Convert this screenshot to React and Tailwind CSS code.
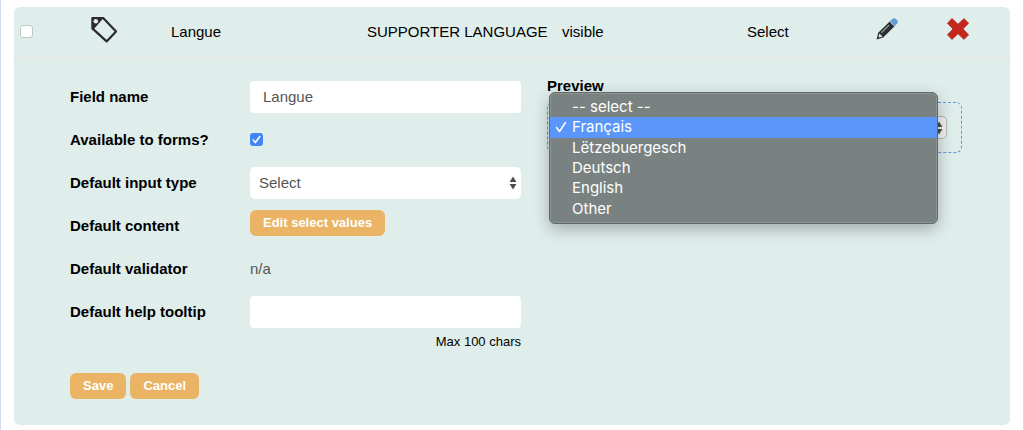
import React from "react";

const OPTIONS = ["-- select --", "Français", "Lëtzebuergesch", "Deutsch", "English", "Other"];

function TagIcon() {
  return (
    <svg width="28" height="28" viewBox="0 0 28 28" aria-hidden="true">
      <path d="M2.4 2h10.8L26 15.4 16.6 25.4 2.4 12.4z" fill="none" stroke="#2b2b2e" strokeWidth="2.2" strokeLinejoin="round" />
      <path d="M2 1.6h12L2.6 14.6 2 12z" fill="#2b2b2e" />
      <circle cx="5.8" cy="5.2" r="2.3" fill="#dfedeb" />
    </svg>
  );
}

function PencilIcon() {
  return (
    <svg width="22" height="22" viewBox="0 0 22 22" aria-hidden="true">
      <path d="M.6 21.4 2.2 14.8 14 3.2 18.8 8 7.2 19.6z" fill="#2b2e30" />
      <path d="M2.4 18.8l1-3.4 3.2 3.2-2.9 1z" fill="#d3dedc" />
      <path d="M5.4 14.8 13.2 7" fill="none" stroke="#8f9897" strokeWidth="1.3" />
      <path d="M14.2 3 16.2 1q2-1.6 3.8 0l1 1q1.6 2 0 3.8L19 7.8z" fill="#5e9fd8" />
      <path d="m13.6 3.6 4.8 4.8" stroke="#aebfc6" strokeWidth=".8" />
    </svg>
  );
}

function CrossIcon() {
  return (
    <svg width="22" height="22" viewBox="0 0 22 22" aria-hidden="true">
      <path
        d="M5 .6 11 6.3 17 .6l4.6 4.6L16 11l5.6 5.8-4.6 4.6-6-5.7-6 5.7-4.6-4.6L6 11 .4 5.2z"
        fill="#c2281d"
        stroke="#c2281d"
        strokeWidth=".8"
        strokeLinejoin="round"
      />
    </svg>
  );
}

function UpDown() {
  return (
    <svg width="8" height="14" viewBox="0 0 8 14" aria-hidden="true">
      <path d="M4 .4 7.4 6H.6zM4 13.6 7.4 8H.6z" fill="#4b4b4b" />
    </svg>
  );
}

function Row({ label, htmlFor, children }) {
  return (
    <div className="flex h-[43px] items-center">
      {htmlFor ? (
        <label htmlFor={htmlFor} className="w-[180px] shrink-0 font-bold">{label}</label>
      ) : (
        <span className="w-[180px] shrink-0 font-bold">{label}</span>
      )}
      <div className="flex min-w-0 flex-1 items-center">{children}</div>
    </div>
  );
}

function Button({ children }) {
  return (
    <button type="button" className="h-[26px] rounded-md bg-[#eab464] px-[13px] text-[13px] font-bold text-white">
      {children}
    </button>
  );
}

function PreviewMenu() {
  return (
    <ul
      role="listbox"
      aria-label="Preview options"
      className="absolute -top-[11px] right-[23px] left-px flex h-[132px] flex-col rounded-md border border-[#626a69] bg-[#7a8281] py-1 font-['Inter',sans-serif] text-[15px] text-white shadow-[0_5px_16px_rgba(0,0,0,0.28),inset_0_0_0_1px_#8c9392]"
    >
      {OPTIONS.map((option) => {
        const selected = option === "Français";
        return (
          <li
            key={option}
            role="option"
            aria-selected={selected}
            className={selected ? "flex flex-1 items-center bg-[#5b97fb]" : "flex flex-1 items-center"}
          >
            <span className="flex w-[22px] justify-center">
              {selected && (
                <svg width="12" height="12" viewBox="0 0 12 12" aria-hidden="true">
                  <path d="m1.5 6.5 3 4 6-9" fill="none" stroke="white" strokeWidth="1.5" strokeLinecap="round" strokeLinejoin="round" />
                </svg>
              )}
            </span>
            {option}
          </li>
        );
      })}
    </ul>
  );
}

export default function App() {
  return (
    <main className="min-h-screen border-x border-[#d0dce9] bg-white px-[13px] pt-[7px] pb-[5px] font-['Liberation_Sans',Arial,sans-serif] text-[15px] leading-5 text-black">
      <section className="rounded-md bg-[#dfedeb]">
        <header className="grid h-[50px] grid-cols-[70fr_81fr_196fr_195fr_185fr_129fr_71fr_63fr] items-center border-b border-[#e6e7e6] pl-1.5">
          <input
            type="checkbox"
            aria-label="Select Langue"
            className="size-[13px] appearance-none rounded-[3px] border border-[#c3c6c6] bg-white"
          />
          <span className="pb-1"><TagIcon /></span>
          <span>Langue</span>
          <span className="whitespace-nowrap">SUPPORTER LANGUAGE</span>
          <span>visible</span>
          <span>Select</span>
          <button type="button" aria-label="Edit" className="justify-self-start pb-1.5"><PencilIcon /></button>
          <button type="button" aria-label="Delete" className="justify-self-start pb-1.5"><CrossIcon /></button>
        </header>

        <form className="grid grid-cols-[451fr_415fr] gap-x-[26px] pt-[18px] pr-12 pb-[26px] pl-14">
          <div>
            <Row label="Field name" htmlFor="field-name">
              <input
                id="field-name"
                type="text"
                defaultValue="Langue"
                className="h-8 w-full rounded-[4px] bg-white px-[13px] text-[#555]"
              />
            </Row>
            <Row label="Available to forms?" htmlFor="available">
              <span className="relative flex">
                <input
                  id="available"
                  type="checkbox"
                  defaultChecked
                  className="peer size-[13px] appearance-none rounded-[3px] bg-white checked:bg-[#4285f4]"
                />
                <svg className="pointer-events-none absolute inset-0 hidden peer-checked:block" width="13" height="13" viewBox="0 0 13 13" aria-hidden="true">
                  <path d="m3.2 7 2.2 2.5 4.4-6" fill="none" stroke="white" strokeWidth="1.5" strokeLinecap="round" />
                </svg>
              </span>
            </Row>
            <Row label="Default input type" htmlFor="input-type">
              <div className="relative w-full">
                <select id="input-type" defaultValue="Select" className="block h-8 w-full appearance-none rounded-[5px] bg-white px-[9px] text-[#555]">
                  <option>Select</option>
                  <option>Text</option>
                </select>
                <span className="pointer-events-none absolute inset-y-0 right-1 flex items-center"><UpDown /></span>
              </div>
            </Row>
            <Row label="Default content">
              <span className="pb-1.5"><Button>Edit select values</Button></span>
            </Row>
            <Row label="Default validator">
              <span className="text-[#555]">n/a</span>
            </Row>
            <Row label="Default help tooltip" htmlFor="tooltip">
              <input id="tooltip" type="text" className="h-8 w-full rounded-[4px] bg-white px-[13px] text-[#555]" />
            </Row>
            <p className="-mt-px text-right text-[13px]">Max 100 chars</p>
            <div className="mt-[21px] flex gap-1">
              <Button>Save</Button>
              <Button>Cancel</Button>
            </div>
          </div>

          <div>
            <label htmlFor="preview" className="mt-px block font-bold">Preview</label>
            <div className="relative mt-1.5 rounded-md border border-dashed border-[#5b9bd8] px-3.5 py-[13px]">
              <div className="relative">
                <select id="preview" defaultValue="Français" className="block h-[23px] w-full appearance-none rounded-[5px] border border-[#b5b8b8] bg-[#f2f2f2] px-2">
                  {OPTIONS.map((option) => (
                    <option key={option}>{option}</option>
                  ))}
                </select>
                <span className="pointer-events-none absolute inset-y-0 right-1 flex items-center"><UpDown /></span>
              </div>
              <PreviewMenu />
            </div>
          </div>
        </form>
      </section>
    </main>
  );
}
